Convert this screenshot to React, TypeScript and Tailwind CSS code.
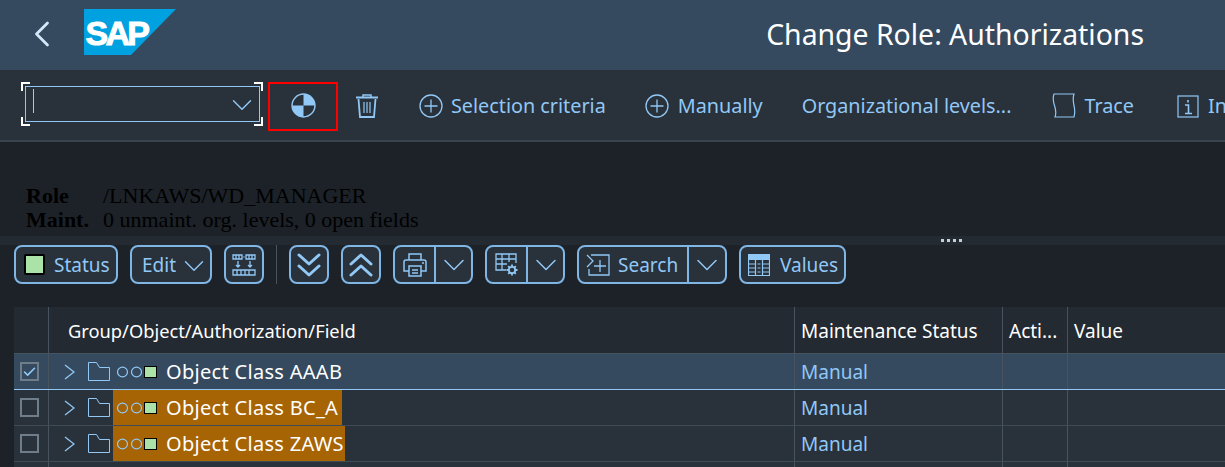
import React from 'react'
import { ChevronDown, ChevronLeft, Check } from 'lucide-react'

const BLUE = '#91c8f6'

function CirclePlus() {
  return (
    <svg className="shrink-0" width="24" height="24" viewBox="0 0 24 24" fill="none" stroke={BLUE} strokeWidth="1.3">
      <circle cx="12" cy="12" r="11" />
      <path d="M12 5.5v13M5.5 12h13" />
    </svg>
  )
}

function ToolbarLabel({ children, className }: { children: React.ReactNode; className?: string }) {
  return (
    <span className={`text-[19.8px] leading-none text-[#91c8f6] whitespace-nowrap shrink-0 mt-[1px] ${className ?? ''}`}>
      {children}
    </span>
  )
}

function Corner({ className }: { className: string }) {
  return <span className={`absolute w-[9px] h-[9px] border-white ${className}`} />
}

function Header() {
  return (
    <div className="h-[70px] bg-[#354a5f] flex items-start shrink-0">
      <ChevronLeft className="ml-[20px] mt-[12px] text-[#d5e8fa]" size={44} strokeWidth={1.5} />
      <svg className="ml-[20px] mt-[9px]" width="92" height="46" viewBox="0 0 92 46">
        <polygon points="0,0 92,0 47,46 0,46" fill="#00a1e0" />
        <text
          x="1.5"
          y="36"
          fontFamily="Liberation Sans"
          fontWeight="700"
          fontSize="34"
          letterSpacing="-2.8"
          fill="#fff"
          stroke="#fff"
          strokeWidth="1"
        >
          SAP
        </text>
      </svg>
      <div className="ml-auto mr-[81px] mt-[15px] text-[28.4px] leading-[38px] text-white whitespace-nowrap">
        Change Role: Authorizations
      </div>
    </div>
  )
}

function MainToolbar() {
  return (
    <div className="h-[72px] bg-[#29313a] border-b-2 border-[#3a444f] flex items-center shrink-0 overflow-hidden">
      {/* command field */}
      <div className="relative ml-[21px] mt-[-2px] w-[242px] h-[44px] flex items-center justify-center shrink-0">
        <Corner className="left-0 top-0 border-l-2 border-t-2" />
        <Corner className="right-0 top-0 border-r-2 border-t-2" />
        <Corner className="left-0 bottom-0 border-l-2 border-b-2" />
        <Corner className="right-0 bottom-0 border-r-2 border-b-2" />
        <div className="relative w-[235px] h-[36px] border border-[#91c8f6] flex items-center justify-end">
          <span className="absolute left-[7px] top-[2px] w-px h-[24px] bg-[#b9c4cf]" />
          <ChevronDown className="text-[#91c8f6] mt-[2px]" size={34} strokeWidth={1} />
        </div>
      </div>
      {/* highlighted enter button */}
      <div className="ml-[5px] mt-[3px] w-[70px] h-[49px] border-2 border-[#ff0000] flex items-center justify-center shrink-0 pb-[3px]">
        <svg width="25" height="25" viewBox="0 0 24 24">
          <circle cx="12" cy="12" r="11" fill="none" stroke={BLUE} strokeWidth="1.4" />
          <path d="M12 12V1a11 11 0 0 1 11 11zM12 12v11A11 11 0 0 1 1 12z" fill={BLUE} />
        </svg>
      </div>
      <svg className="ml-[18px] mt-[2px] shrink-0" width="22" height="24" viewBox="0 0 22 24" fill="none" stroke={BLUE}>
        <path d="M0 3.5h22" strokeWidth="2" />
        <path d="M7 3V1h8v2" strokeWidth="1.5" />
        <path d="M2.5 5L4 23h14l1.5-18" strokeWidth="1.8" />
        <path d="M8 8v11M11 8v11M14 8v11" strokeWidth="1.2" />
      </svg>
      <div className="ml-[41px] mt-[1px]">
        <CirclePlus />
      </div>
      <ToolbarLabel className="ml-[8px]">Selection criteria</ToolbarLabel>
      <div className="ml-[39px] mt-[1px]">
        <CirclePlus />
      </div>
      <ToolbarLabel className="ml-[9px]">Manually</ToolbarLabel>
      <ToolbarLabel className="ml-[39px]">Organizational levels...</ToolbarLabel>
      <svg className="ml-[41px] mt-[1px] shrink-0" width="24" height="25" viewBox="0 0 24 25" fill="none" stroke={BLUE} strokeWidth="1.2">
        <path d="M2 1h20c-1.5 4-1 7 0 11.5s1 8 0 11.5H3c1.5-4 1-7-.5-11.500S.5 5 2 1z" />
      </svg>
      <ToolbarLabel className="ml-[8px]">Trace</ToolbarLabel>
      <svg className="ml-[43px] mt-[1px] shrink-0" width="22" height="24" viewBox="0 0 22 24" fill="none" stroke={BLUE}>
        <rect x="1" y="2" width="20" height="21" strokeWidth="1.2" />
        <path d="M11 6v2.5M8 11h3.500v8M8 19.5h7" strokeWidth="1.6" />
      </svg>
      <ToolbarLabel className="ml-[9px]">Information</ToolbarLabel>
    </div>
  )
}

function RoleInfo() {
  return (
    <div
      className="h-[94px] pt-[42px] pl-[26px] text-[22px] leading-[24px] text-black shrink-0"
      style={{ fontFamily: '"Liberation Serif", serif' }}
    >
      <div className="flex">
        <span className="w-[77px] font-bold">Role</span>
        <span>/LNKAWS/WD_MANAGER</span>
      </div>
      <div className="flex">
        <span className="w-[77px] font-bold">Maint.</span>
        <span>0 unmaint. org. levels, 0 open fields</span>
      </div>
    </div>
  )
}

function Splitter() {
  return (
    <div className="h-[9px] bg-[#232a31] flex items-center justify-center gap-[3px] pl-[677px] shrink-0">
      {[0, 1, 2, 3].map((i) => (
        <span key={i} className="w-[3px] h-[3px] bg-[#c6ced6]" />
      ))}
    </div>
  )
}

const btn =
  'h-[39px] rounded-[8px] border-2 border-[#7fb6e6] bg-[#29313a] flex items-center shrink-0 text-[#91c8f6] text-[19px]'

function SplitButton({ children, className }: { children: React.ReactNode; className: string }) {
  return (
    <div className={`${btn} ${className}`}>
      {children}
      <div className="flex-1 h-full border-l-2 border-[#7fb6e6] flex items-center justify-center overflow-hidden">
        <ChevronDown className="shrink-0" size={36} strokeWidth={1} />
      </div>
    </div>
  )
}

function DoubleChevron({ up }: { up?: boolean }) {
  return (
    <svg width="24" height="26" viewBox="0 0 24 26" fill="none" stroke={BLUE} strokeWidth="3" strokeLinecap="round" strokeLinejoin="round">
      <path d={up ? 'M2 12L12 3l10 9M2 23l10-9 10 9' : 'M2 3l10 9 10-9M2 14l10 9 10-9'} />
    </svg>
  )
}

function TableToolbar() {
  return (
    <div className="h-[39px] flex items-center pl-[14px] shrink-0">
      <div className={`${btn} w-[104px] pl-[8px]`}>
        <span className="w-[21px] h-[21px] rounded-[2px] bg-[#abe2a7] border-2 border-black shrink-0" />
        <span className="ml-[9px] mt-[2px]">Status</span>
      </div>
      <div className={`${btn} w-[82px] ml-[12px] pl-[10px]`}>
        <span className="mt-[2px]">Edit</span>
        <ChevronDown className="ml-[1px] mt-[2px] shrink-0" size={34} strokeWidth={1} />
      </div>
      <div className={`${btn} w-[40px] ml-[12px] justify-center`}>
        <svg width="26" height="26" viewBox="0 0 26 26" fill="none" stroke={BLUE} strokeWidth="1.3">
          <path d="M2 3h9v4H2zM5 3v4M8 3v4M15 3h9v4h-9zM18 3v4M21 3v4M12.5 5h1" />
          <path d="M7 9v6M5 13l2 2 2-2M19 9v6M17 13l2 2 2-2" />
          <path d="M2 18h22v5H2zM6 18v5M10 18v5M14 18v5M18 18v5" />
        </svg>
      </div>
      <div className="w-px h-[39px] bg-[#47535f] ml-[12px] shrink-0" />
      <div className={`${btn} w-[40px] ml-[12px] justify-center`}>
        <DoubleChevron />
      </div>
      <div className={`${btn} w-[40px] ml-[12px] justify-center`}>
        <DoubleChevron up />
      </div>
      <SplitButton className="w-[80px] ml-[12px]">
        <div className="w-[39px] flex justify-center shrink-0">
          <svg width="24" height="24" viewBox="0 0 24 24" fill="none" stroke={BLUE} strokeWidth="1.5">
            <path d="M6 7V1h12v6" />
            <path d="M6 18H1V9q0-2 2-2h18q2 0 2 2v9h-5" />
            <path d="M6 13h12v10H6zM9 17h6M9 20h6M19 10h2" />
          </svg>
        </div>
      </SplitButton>
      <SplitButton className="w-[80px] ml-[12px]">
        <div className="w-[39px] flex justify-center shrink-0">
          <svg width="26" height="26" viewBox="0 0 26 26" fill="none" stroke={BLUE} strokeWidth="1.3">
            <path d="M12 18H2V2h20v9M2 7h20M2 12h11M8 2v16M15 2v8" />
            <circle cx="18" cy="18" r="3.2" strokeWidth="1.8" />
            <path
              d="M18 12.5v2M18 21.5v2M12.5 18h2M21.5 18h2M14.2 14.2l1.4 1.4M20.4 20.4l1.4 1.4M14.2 21.8l1.4-1.4M20.4 15.6l1.4-1.4"
              strokeWidth="1.8"
            />
          </svg>
        </div>
      </SplitButton>
      <SplitButton className="w-[150px] ml-[12px]">
        <div className="w-[108px] flex items-center pl-[7px] shrink-0">
          <svg width="24" height="24" viewBox="0 0 24 24" fill="none" stroke={BLUE} strokeWidth="1.3">
            <path d="M1 2l6 6-6 6M5 2h18v20H3v-6M14 7v12M8 13h12" />
          </svg>
          <span className="ml-[8px] mt-[2px]">Search</span>
        </div>
      </SplitButton>
      <div className={`${btn} w-[107px] ml-[12px] pl-[7px]`}>
        <svg width="22" height="22" viewBox="0 0 22 22" fill="none" stroke={BLUE} strokeWidth="1.2" className="shrink-0">
          <rect x="0" y="0" width="22" height="6" fill={BLUE} stroke="none" />
          <path d="M.5 5v16.5h21V5M7.5 5v17M14.5 5v17M.5 10h7M.5 14h7M.5 18h7M14.5 10h7M14.500 14h7M14.500 18h7M9.500 10h3M9.500 14h3M9.500 18h3" />
        </svg>
        <span className="ml-[10px] mt-[2px]">Values</span>
      </div>
    </div>
  )
}

const colMaint = 'w-[208px] shrink-0 border-l border-[#47535f] pl-[6px] pt-[2px] flex items-center h-full'
const colActi = 'w-[65px] shrink-0 border-l border-[#47535f] pl-[6px] pt-[2px] flex items-center h-full'
const colValue = 'flex-1 border-l border-[#47535f] pl-[6px] pt-[2px] flex items-center h-full'

function Row({ label, selected, mark }: { label: string; selected?: boolean; mark?: string }) {
  return (
    <div className={`h-[36px] flex border-b ${selected ? 'bg-[#354a5f] border-[#91c8f6]' : 'bg-[#29313a] border-[#3f4b57]'}`}>
      <div className="w-[34px] shrink-0 flex items-center pl-[6px]">
        <span className="w-[19px] h-[19px] border-2 border-[#6f7c89] flex items-center justify-center">
          {selected && <Check className="text-[#91c8f6]" size={16} strokeWidth={2.6} />}
        </span>
      </div>
      <div className="w-[746px] shrink-0 border-l border-[#47535f] flex h-full">
        <div className="w-[64px] shrink-0 flex items-center pl-[15px]">
          <svg width="11" height="16" viewBox="0 0 11 16" fill="none" stroke={BLUE} strokeWidth="1.3" className="shrink-0">
            <path d="M1 1l9 7-9 7" />
          </svg>
          <svg className="ml-[13px] shrink-0" width="22" height="19" viewBox="0 0 22 19" fill="none" stroke={BLUE} strokeWidth="1">
            <path d="M.5 18.500V.5h8l3 5h10v13z" />
          </svg>
        </div>
        <div className={`flex items-center h-[35px] pl-[4px] pr-[1px] ${mark ?? ''}`}>
          <svg width="25" height="12" viewBox="0 0 25 12" fill="none" stroke={BLUE} strokeWidth="1.2" className="shrink-0">
            <ellipse cx="5.500" cy="6" rx="5" ry="4.800" />
            <ellipse cx="19.500" cy="6" rx="5" ry="4.800" />
          </svg>
          <span className="w-[13px] h-[12px] bg-[#abe2a7] border border-black ml-[2px] shrink-0" />
          <span className="ml-[9px] mt-[1px] text-[20px] tracking-[0.3px] text-white whitespace-nowrap">{label}</span>
        </div>
      </div>
      <div className={`${colMaint} text-[19px] text-[#91c8f6]`}>Manual</div>
      <div className={colActi} />
      <div className={colValue} />
    </div>
  )
}

function Table() {
  return (
    <div className="ml-[14px] mt-[23px] flex-1 overflow-hidden bg-[#29313a]">
      <div className="h-[47px] flex bg-[#232a31] border-b border-[#47535f] text-[19px] text-white">
        <div className="w-[34px] shrink-0" />
        <div className="w-[746px] shrink-0 border-l border-[#47535f] pl-[19px] pt-[2px] flex items-center h-full text-[18.3px]">
          Group/Object/Authorization/Field
        </div>
        <div className={colMaint}>Maintenance Status</div>
        <div className={colActi}>Acti...</div>
        <div className={colValue}>Value</div>
      </div>
      <Row label="Object Class AAAB" selected />
      <Row label="Object Class BC_A" mark="bg-[#a66404] w-[229px]" />
      <Row label="Object Class ZAWS" mark="bg-[#a66404] w-[232px]" />
      <div className="h-[6px] flex">
        <div className="w-[34px] shrink-0" />
        <div className="w-[746px] shrink-0 border-l border-[#47535f]" />
        <div className={colMaint} />
        <div className={colActi} />
        <div className={colValue} />
      </div>
    </div>
  )
}

export default function App() {
  return (
    <div className="w-[1225px] h-[467px] overflow-hidden bg-[#1c2228] flex flex-col" style={{ fontFamily: '"Noto Sans", sans-serif' }}>
      <Header />
      <MainToolbar />
      <RoleInfo />
      <Splitter />
      <TableToolbar />
      <Table />
    </div>
  )
}
